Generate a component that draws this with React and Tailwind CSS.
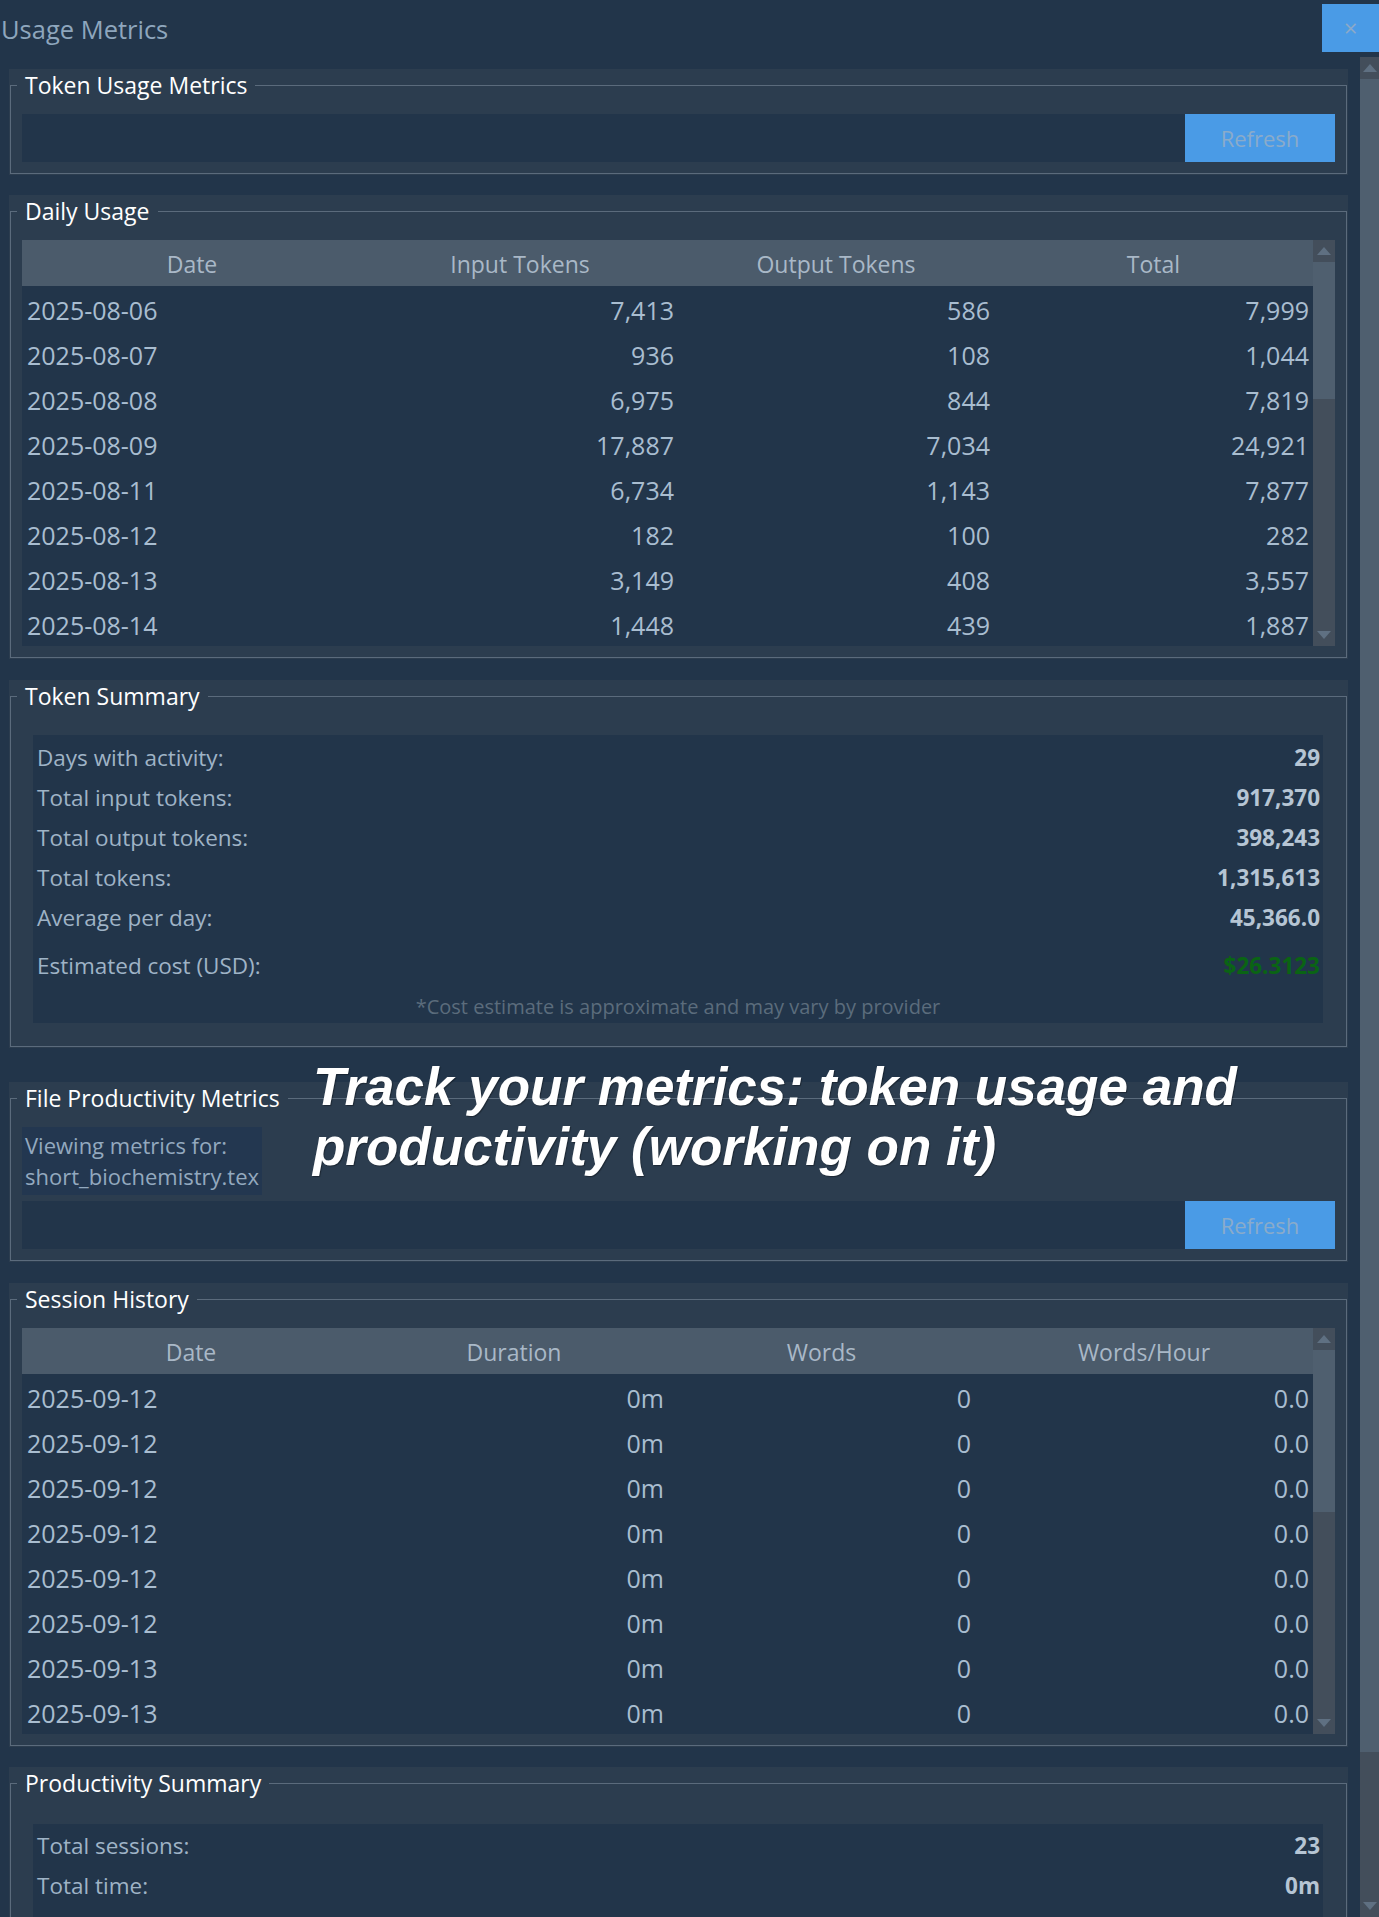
import React from "react";

const dailyUsage = [
  ["2025-08-06", "7,413", "586", "7,999"],
  ["2025-08-07", "936", "108", "1,044"],
  ["2025-08-08", "6,975", "844", "7,819"],
  ["2025-08-09", "17,887", "7,034", "24,921"],
  ["2025-08-11", "6,734", "1,143", "7,877"],
  ["2025-08-12", "182", "100", "282"],
  ["2025-08-13", "3,149", "408", "3,557"],
  ["2025-08-14", "1,448", "439", "1,887"],
];

const sessions = [
  ["2025-09-12", "0m", "0", "0.0"],
  ["2025-09-12", "0m", "0", "0.0"],
  ["2025-09-12", "0m", "0", "0.0"],
  ["2025-09-12", "0m", "0", "0.0"],
  ["2025-09-12", "0m", "0", "0.0"],
  ["2025-09-12", "0m", "0", "0.0"],
  ["2025-09-13", "0m", "0", "0.0"],
  ["2025-09-13", "0m", "0", "0.0"],
];

const tokenSummary = [
  ["Days with activity:", "29"],
  ["Total input tokens:", "917,370"],
  ["Total output tokens:", "398,243"],
  ["Total tokens:", "1,315,613"],
  ["Average per day:", "45,366.0"],
];

const Arrow = ({ down }) => (
  <svg width="14" height="8" viewBox="0 0 14 8">
    <path d={down ? "M0 0H14L7 8Z" : "M7 0L14 8H0Z"} fill="#5f7082" />
  </svg>
);

const ScrollBar = ({ thumbClass }) => (
  <div className="w-[22px] flex flex-col bg-[#434e5b] shrink-0">
    <div className="h-[22px] flex items-center justify-center">
      <Arrow />
    </div>
    <div className={`bg-[#4f5f6f] ${thumbClass}`}></div>
    <div className="flex-1"></div>
    <div className="h-[22px] flex items-center justify-center">
      <Arrow down />
    </div>
  </div>
);

const Group = ({ title, children, className = "" }) => (
  <div className={`bg-[#2c3d4f] pt-[16px] px-[1px] pb-[1px] ${className}`}>
    <div className="border border-[#5b6b7c]">
      <div className="-mt-[17px] ml-[6px] flex">
        <span className="bg-[#2c3d4f] px-[8px] h-[32px] leading-[33px] text-[23px] text-white">
          {title}
        </span>
      </div>
      <div className="mx-[11px] mt-[13px] mb-[11px] flex flex-col">{children}</div>
    </div>
  </div>
);

const RefreshBar = () => (
  <div className="flex h-[48px]">
    <div className="flex-1 bg-[#22354a]"></div>
    <button className="w-[150px] h-[48px] bg-[#4a9be6] text-[#8aabca] text-[22px]">
      Refresh
    </button>
  </div>
);

const DataTable = ({ headers, rows, colsClass, thumbClass }) => (
  <div className="flex h-[406px]">
    <div className="flex-1 flex flex-col bg-[#22354a]">
      <div className={`grid ${colsClass} h-[46px] pt-[2px] bg-[#4b5b6b] text-[#a9b8c7] text-[23px]`}>
        {headers.map((h) => (
          <div key={h} className="flex items-center justify-center">
            {h}
          </div>
        ))}
      </div>
      {rows.map((row, i) => (
        <div
          key={i}
          className={`grid ${colsClass} h-[45px] pt-[4px] items-center text-[25px] text-[#a9bdd0]`}
        >
          {row.map((cell, j) => (
            <div key={j} className={j === 0 ? "pl-[5px]" : "text-right pr-[4px]"}>
              {cell}
            </div>
          ))}
        </div>
      ))}
    </div>
    <ScrollBar thumbClass={thumbClass} />
  </div>
);

const SummaryRow = ({ label, value, valueClass = "text-[#b6c5d4]" }) => (
  <div className="flex justify-between items-center h-[40px] pl-[4px] pr-[3px] text-[22.5px]">
    <span className="text-[#9fb3c6]">{label}</span>
    <span className={`font-bold ${valueClass}`}>{value}</span>
  </div>
);

const App = () => {
  return (
    <div className="relative h-[1917px] overflow-hidden bg-[#22354a] font-['Open_Sans','Noto_Sans',sans-serif]">
      {/* Title bar */}
      <div className="flex items-start h-[57px]">
        <div className="flex-1 h-[57px] flex items-center pl-[1px] pt-[1px] text-[25.5px] text-[#8ea6bd]">
          Usage Metrics
        </div>
        <button className="mt-[4px] w-[57px] h-[48px] bg-[#4a9be6] text-[#8aa9c8] text-[24px] leading-none flex items-center justify-center">
          ×
        </button>
      </div>

      <div className="flex h-[1860px]">
        {/* Scrollable content */}
        <div className="flex-1 pl-[9px] pr-[12px] pt-[12px] overflow-hidden">
          <Group title="Token Usage Metrics">
            <RefreshBar />
          </Group>

          <Group title="Daily Usage" className="mt-[20px]">
            <DataTable
              headers={["Date", "Input Tokens", "Output Tokens", "Total"]}
              rows={dailyUsage}
              colsClass="grid-cols-[340px_316px_316px_1fr]"
              thumbClass="h-[137px]"
            />
          </Group>

          <Group title="Token Summary" className="mt-[21px]">
            <div className="ml-[11px] mr-[12px] mt-[10px] mb-[12px] bg-[#22354a] pt-[3px] pb-[2px]">
              {tokenSummary.map(([label, value]) => (
                <SummaryRow key={label} label={label} value={value} />
              ))}
              <div className="mt-[8px]">
                <SummaryRow
                  label="Estimated cost (USD):"
                  value="$26.3123"
                  valueClass="text-[#0a6414]"
                />
              </div>
              <div className="mt-[7px] h-[28px] flex items-center justify-center text-[20px] text-[#5b6c7c]">
                *Cost estimate is approximate and may vary by provider
              </div>
            </div>
          </Group>

          <Group title="File Productivity Metrics" className="mt-[34px]">
            <div className="flex">
              <div className="bg-[#233750] px-[3px] py-[3px] text-[22px] leading-[31px] text-[#93a9bf]">
                <div>Viewing metrics for:</div>
                <div>short_biochemistry.tex</div>
              </div>
            </div>
            <div className="mt-[6px]">
              <RefreshBar />
            </div>
          </Group>

          <Group title="Session History" className="mt-[21px]">
            <DataTable
              headers={["Date", "Duration", "Words", "Words/Hour"]}
              rows={sessions}
              colsClass="grid-cols-[338px_308px_307px_1fr]"
              thumbClass="h-[162px]"
            />
          </Group>

          <Group title="Productivity Summary" className="mt-[20px]">
            <div className="ml-[11px] mr-[12px] mt-[12px] mb-[12px] bg-[#22354a] pt-[2px] pb-[40px]">
              <SummaryRow label="Total sessions:" value="23" />
              <SummaryRow label="Total time:" value="0m" />
            </div>
          </Group>
        </div>

        {/* Window scrollbar */}
        <div className="w-[19px] flex flex-col bg-[#434e5b] shrink-0">
          <div className="h-[22px] flex items-center justify-center">
            <Arrow />
          </div>
          <div className="bg-[#4f5f6f] h-[1673px]"></div>
          <div className="flex-1"></div>
          <div className="h-[22px] flex items-center justify-center">
            <Arrow down />
          </div>
        </div>
      </div>

      {/* Overlay caption */}
      <div className="absolute left-[313px] top-[1057px] font-['Liberation_Sans',Arial,sans-serif] font-bold italic text-[53px] leading-[60px] text-white [text-shadow:1px_1px_1px_rgba(0,0,0,0.35)]">
        Track your metrics: token usage and
        <br />
        productivity (working on it)
      </div>
    </div>
  );
};

export default App;
